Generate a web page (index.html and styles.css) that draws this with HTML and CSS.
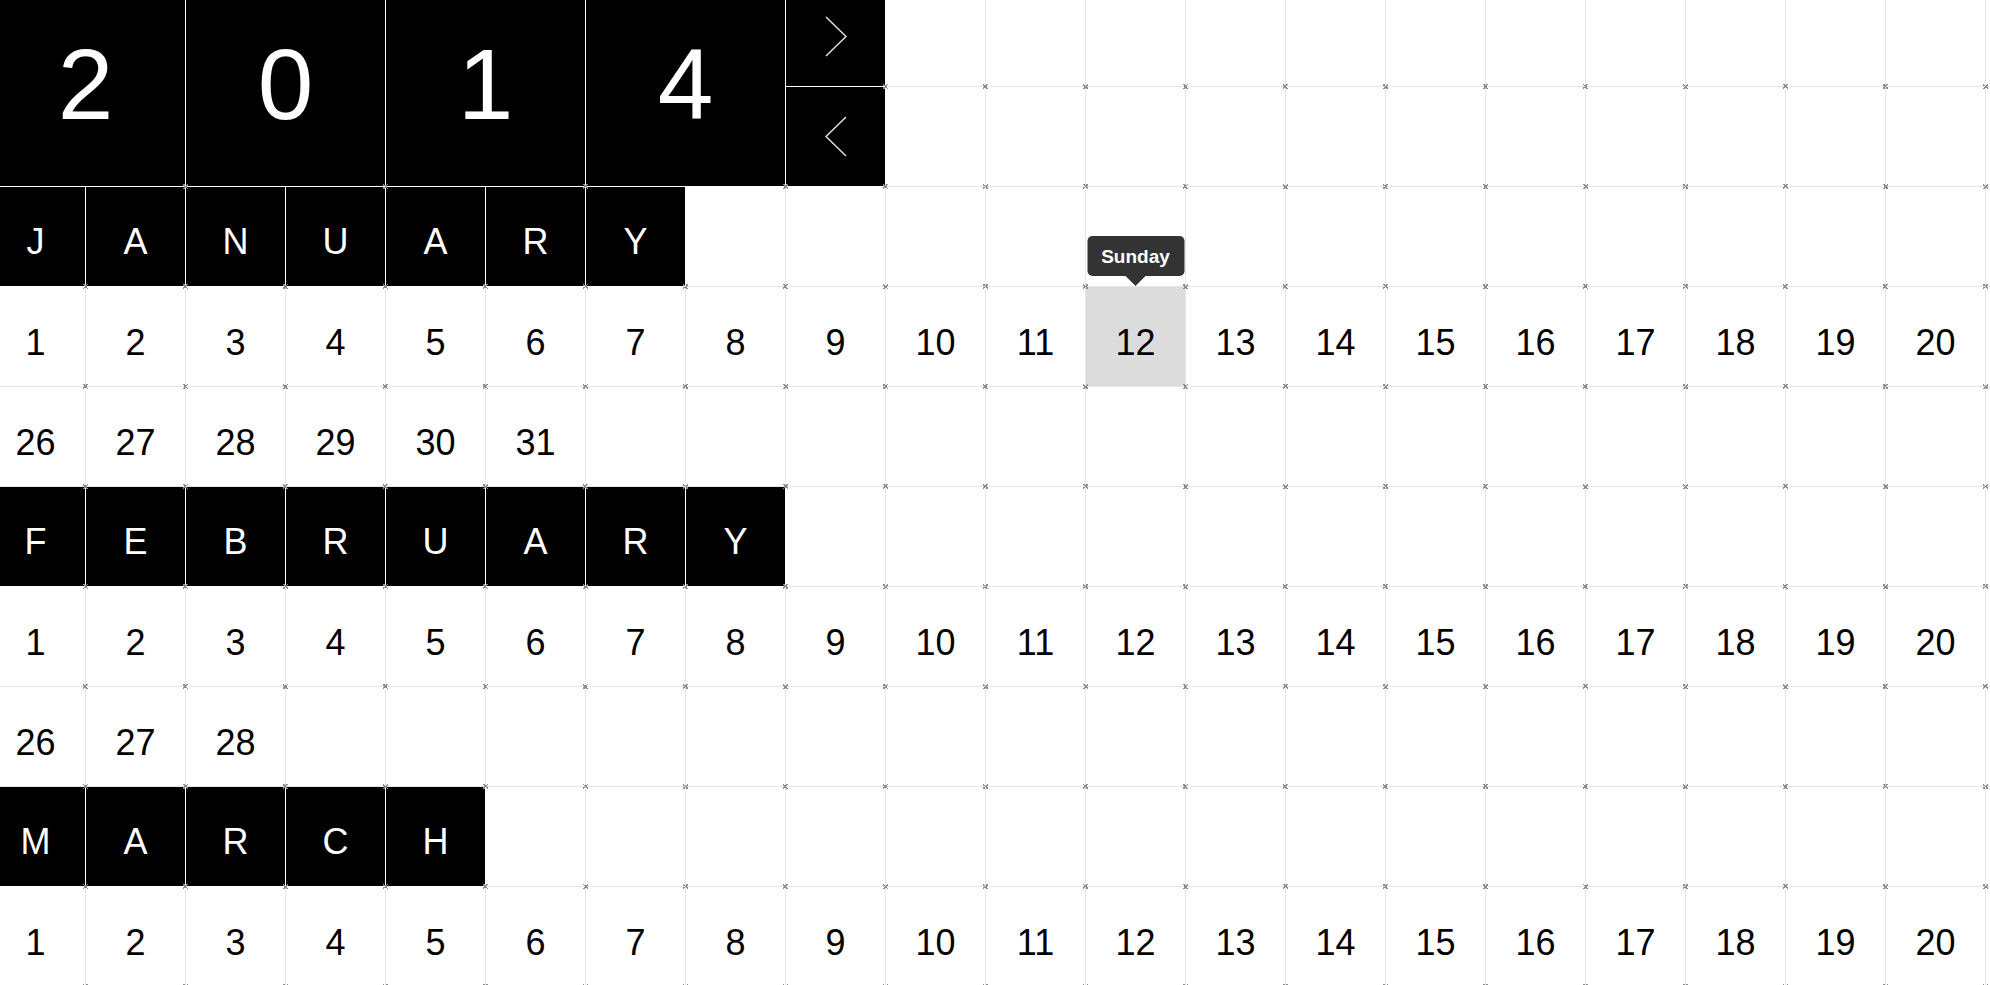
FILE: index.html
```html
<!DOCTYPE html>
<html lang="en">

<head>
    <meta charset="UTF-8">
    <meta name="viewport" content="width=device-width, initial-scale=1.0">
    <title>2014</title>
    <link rel="stylesheet" href="styles.css">
</head>

<body>
    <div class="calendar" id="calendar"></div>

    <script>
        const YEAR = 2014;
        const COLS = 25;
        const MONTHS = ['January', 'February', 'March'];
        const DAYS = ['Sunday', 'Monday', 'Tuesday', 'Wednesday', 'Thursday', 'Friday', 'Saturday'];

        const calendar = document.getElementById('calendar');

        function cell(className, text) {
            const el = document.createElement('div');
            el.className = 'cell ' + (className || '');
            if (text !== undefined) el.textContent = text;
            calendar.appendChild(el);
            return el;
        }

        function fill(count) {
            for (let i = 0; i < count; i++) cell('');
        }

        function chevron(points) {
            return '<svg width="22" height="41" viewBox="0 0 22 41"><polyline points="' + points +
                '" fill="none" stroke="#e0e0e0" stroke-width="1.5"/></svg>';
        }

        // Year header: four big digits, next / prev buttons
        String(YEAR).split('').forEach(d => cell('digit', d));
        cell('arrow').innerHTML = chevron('1,1 21,20.5 1,40');
        fill(COLS - 9);
        cell('arrow').innerHTML = chevron('21,1 1,20.5 21,40');
        fill(COLS - 9);

        MONTHS.forEach((name, m) => {
            const letters = name.toUpperCase().split('');
            letters.forEach(l => cell('letter', l));
            fill(COLS - letters.length);

            const total = new Date(YEAR, m + 1, 0).getDate();
            for (let d = 1; d <= total; d++) {
                const day = cell('day', d);
                day.title = DAYS[new Date(YEAR, m, d).getDay()];
                if (m === 0 && d === 12) {
                    day.classList.add('active');
                    const tip = document.createElement('span');
                    tip.className = 'tooltip';
                    tip.textContent = 'Sunday';
                    day.appendChild(tip);
                }
            }
            const rest = total % COLS;
            if (rest) fill(COLS - rest);
        });
    </script>
</body>

</html>
```

FILE: styles.css
```css
:root {
    --cell: 100px;
    --line: #e6e6e6;
    --ink: #000;
}

html,
body {
    margin: 0;
    height: 100%;
    overflow: hidden;
    background: white;
}

body {
    font-family: 'Liberation Sans', Arial, sans-serif;
    color: var(--ink);
}

.calendar {
    display: grid;
    grid-template-columns: repeat(25, var(--cell));
    grid-auto-rows: var(--cell);
    margin: -13px 0 0 -14px;
    width: calc(25 * var(--cell));
}

.cell {
    position: relative;
    box-sizing: border-box;
    border-right: 1px solid var(--line);
    border-bottom: 1px solid var(--line);
    display: flex;
    align-items: center;
    justify-content: center;
    line-height: 1;
}

/* little x at each grid crossing */
.cell::after {
    content: '';
    position: absolute;
    right: -3px;
    bottom: -3px;
    width: 5px;
    height: 5px;
    z-index: 1;
    background:
        linear-gradient(45deg, transparent 40%, #8c8c8c 40%, #8c8c8c 60%, transparent 60%),
        linear-gradient(-45deg, transparent 40%, #8c8c8c 40%, #8c8c8c 60%, transparent 60%);
}

.digit {
    grid-column: span 2;
    grid-row: span 2;
    background: var(--ink);
    border-color: white;
    color: white;
    font-size: 100px;
    padding-bottom: 6px;
}

.arrow {
    background: var(--ink);
    border-color: white;
}

.arrow svg {
    display: block;
}

.letter {
    background: var(--ink);
    border-color: white;
    color: white;
    font-size: 36px;
    padding-top: 11px;
}

.day {
    font-size: 36px;
    padding-top: 12px;
}

.day.active {
    background: #dcdcdc;
}

.tooltip {
    position: absolute;
    left: 50%;
    bottom: calc(100% + 11px);
    transform: translateX(-50%);
    z-index: 2;
    width: 97px;
    height: 40px;
    box-sizing: border-box;
    border-radius: 5px;
    background: #333;
    color: white;
    font-size: 19px;
    font-weight: bold;
    line-height: 42px;
    text-align: center;
}

.tooltip::after {
    content: '';
    position: absolute;
    left: 50%;
    top: 100%;
    margin-left: -10px;
    border: 10px solid transparent;
    border-top-color: #333;
    border-bottom: 0;
}
```
